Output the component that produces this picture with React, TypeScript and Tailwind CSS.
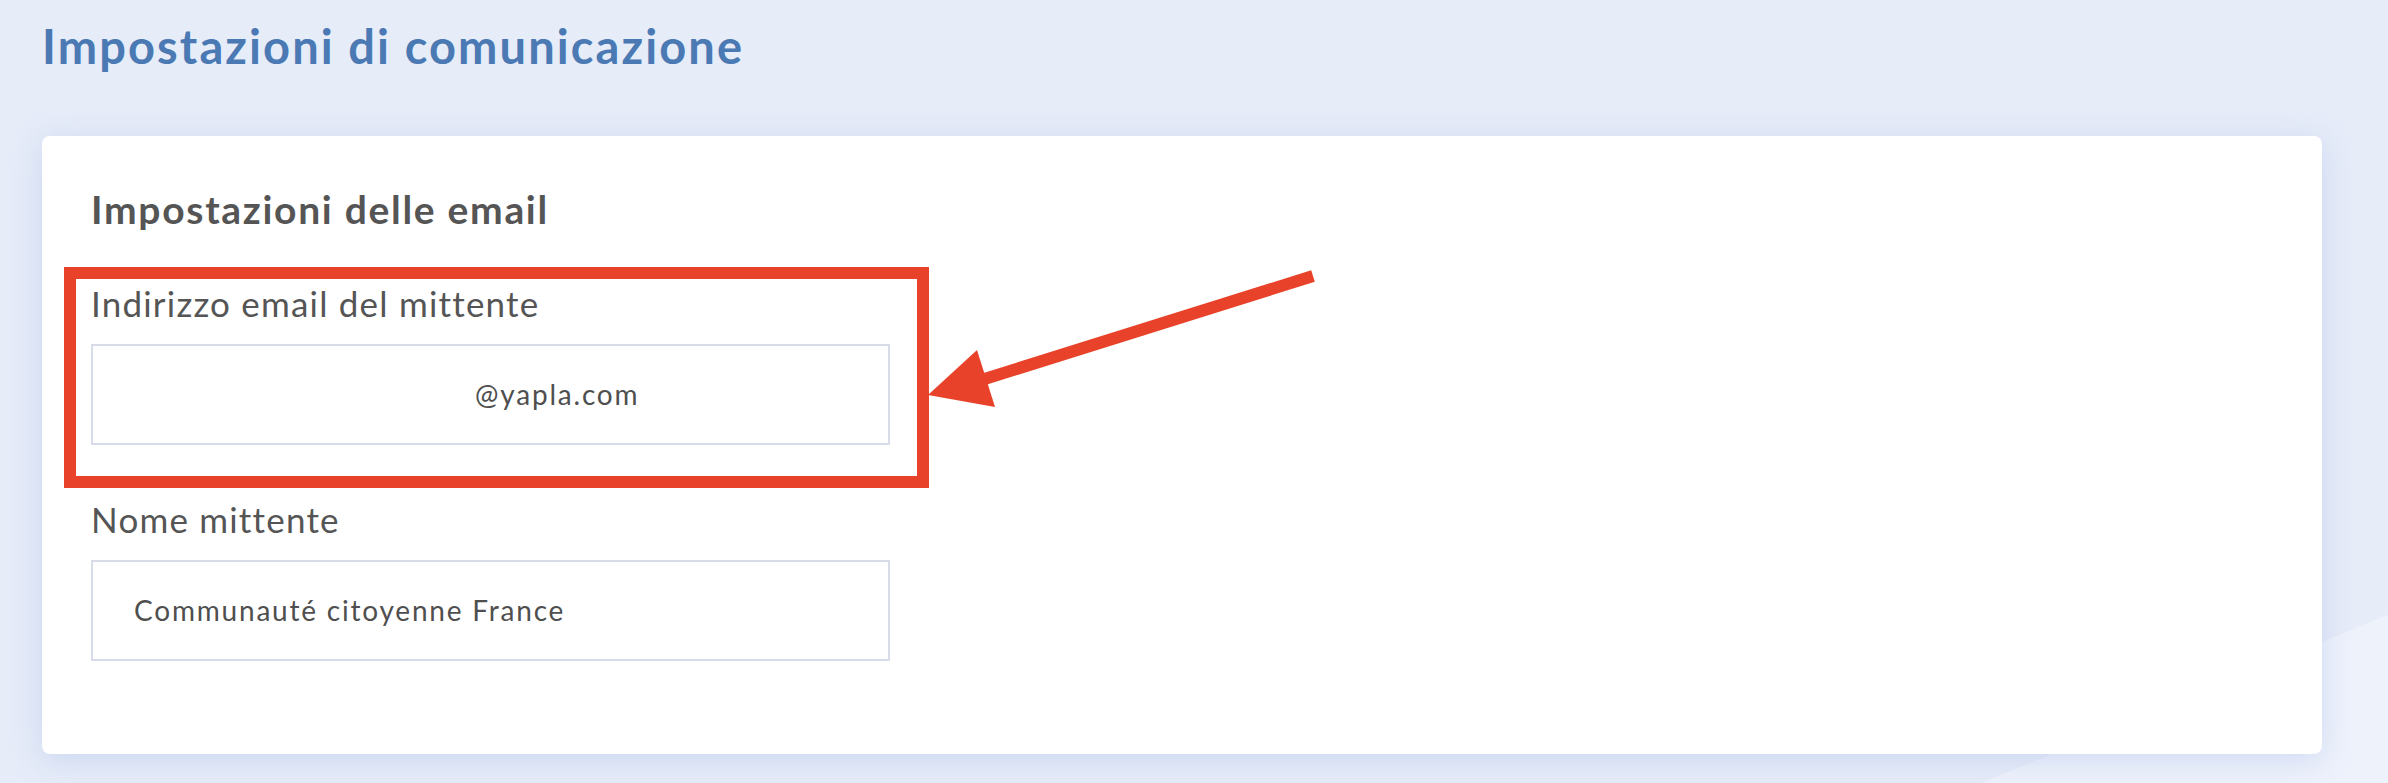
import React from "react";

const font = { fontFamily: '"Lato", "Noto Sans", sans-serif' };

interface FieldProps {
  label: string;
  value: string;
  valueClass: string;
}

const Field: React.FC<FieldProps> = ({ label, value, valueClass }) => (
  <div className="flex flex-col">
    <label className="text-[35px] leading-[1.2] tracking-[1.2px] text-[#555555]">{label}</label>
    <div className="mt-[20px] flex h-[101px] w-[799px] items-center border-2 border-[#d8dce8] bg-white">
      <span className={`text-[28px] leading-[1.2] tracking-[1.8px] text-[#4f4f4f] ${valueClass}`}>{value}</span>
    </div>
  </div>
);

export default function App() {
  return (
    <div
      style={font}
      className="relative h-[783px] w-full overflow-hidden bg-[linear-gradient(157.5deg,#e6ecf8_90.5%,#eef2fb_90.5%)]"
    >
      {/* Page title */}
      <h1 className="pl-[42px] pt-[18px] text-[47px] font-bold leading-[1.2] tracking-[2.1px] text-[#4a79b3]">
        Impostazioni di comunicazione
      </h1>

      {/* Card */}
      <div className="relative ml-[42px] mr-[66px] mt-[62px] h-[618px] rounded-[8px] bg-white px-[49px] pt-[50px] shadow-[0_6px_30px_rgba(170,188,232,0.45)]">
        <h2 className="text-[39px] font-bold leading-[1.2] tracking-[1.7px] text-[#555555]">
          Impostazioni delle email
        </h2>

        <div className="mt-[49px] flex flex-col gap-[53px]">
          <Field label="Indirizzo email del mittente" value="@yapla.com" valueClass="pl-[382px]" />
          <Field label="Nome mittente" value="Communauté citoyenne France" valueClass="pl-[41px]" />
        </div>

        {/* Highlight box */}
        <div className="pointer-events-none absolute left-[22px] top-[131px] h-[221px] w-[865px] border-[12px] border-[#e8432a]" />
      </div>

      {/* Arrow annotation */}
      <svg className="pointer-events-none absolute left-0 top-0" width="2388" height="783" viewBox="0 0 2388 783">
        <line x1="1313" y1="276" x2="975" y2="382" stroke="#e8432a" strokeWidth="12" />
        <polygon points="928,395 977,350 995,407" fill="#e8432a" />
      </svg>
    </div>
  );
}
